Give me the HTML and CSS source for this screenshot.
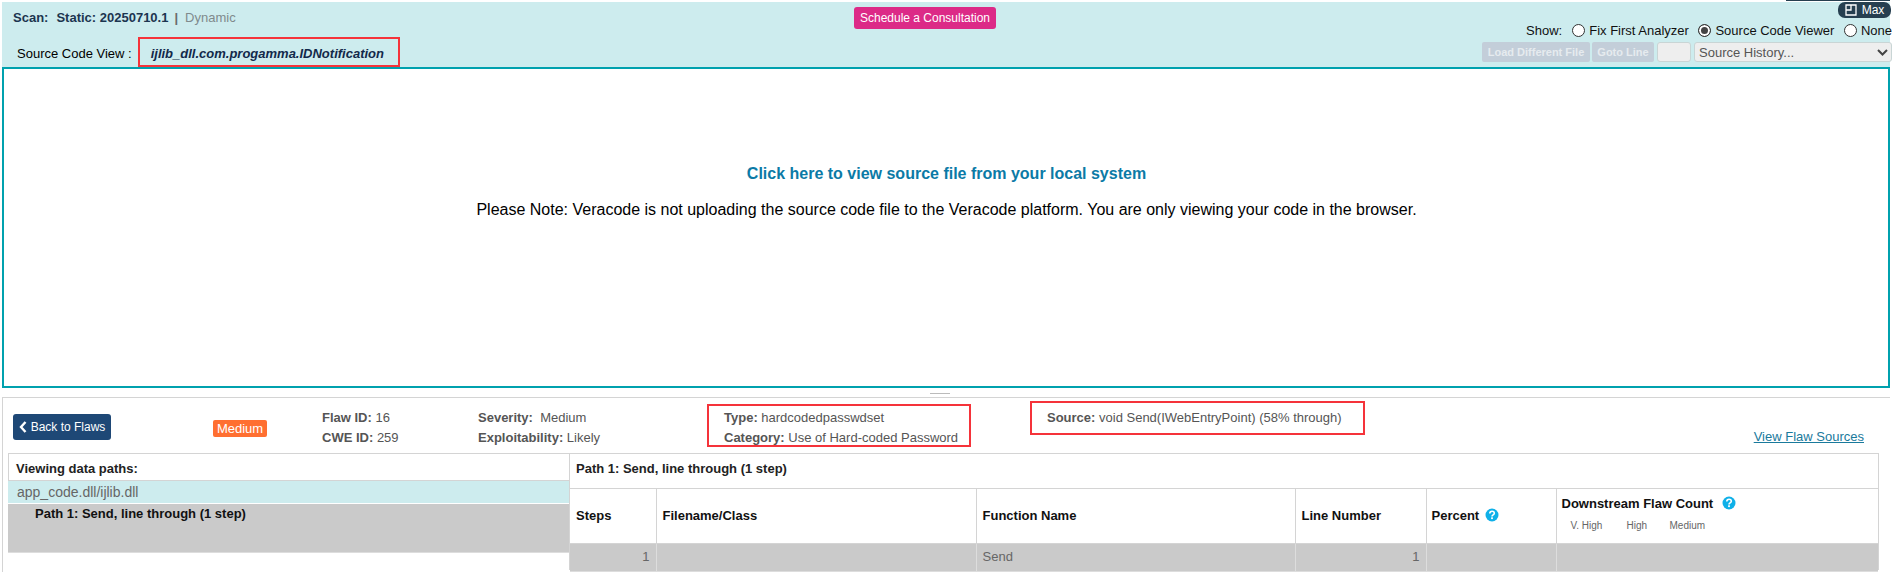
FILE: index.html
```html
<!DOCTYPE html>
<html lang="en">
<head>
<meta charset="utf-8">
<title>Source Code View</title>
<link rel="stylesheet" href="styles.css">
</head>
<body>
<div class="tab-sliver"></div>
<section class="viewer">
  <header class="viewer-head">
    <div class="head-left">
      <div class="scan-row"><b>Scan:</b><b class="scan-static">Static: 20250710.1</b><span class="scan-sep">|</span><span class="scan-dyn">Dynamic</span></div>
      <div class="file-row"><span>Source Code View :</span><em class="file-name">ijlib_dll.com.progamma.IDNotification</em></div>
    </div>
    <div class="head-center"><a class="consult">Schedule a Consultation</a></div>
    <div class="head-right">
      <div class="show-row">
        <span class="show-label">Show:</span>
        <span class="radio"></span><span class="radio-text">Fix First Analyzer</span>
        <span class="radio on"></span><span class="radio-text">Source Code Viewer</span>
        <span class="radio"></span><span>None</span>
      </div>
      <div class="tool-row">
        <span class="tool load">Load Different File</span>
        <span class="tool goto">Goto Line</span>
        <span class="goto-input"></span>
        <span class="history">Source History...<svg class="chev" width="11" height="7" viewBox="0 0 11 7"><path d="M1 1l4.500 4.500L10 1" fill="none" stroke="#444" stroke-width="2"/></svg></span>
      </div>
    </div>
    <div class="max"><svg width="12" height="12" viewBox="0 0 12 12"><path d="M1 1h10v10H1zM6 1v5H1" fill="none" stroke="#fff" stroke-width="1.300"/></svg>Max</div>
  </header>
  <div class="viewer-body">
    <a class="view-link">Click here to view source file from your local system</a>
    <p class="note">Please Note: Veracode is not uploading the source code file to the Veracode platform. You are only viewing your code in the browser.</p>
  </div>
</section>
<div class="splitter"><span></span></div>
<section class="flaw">
  <div class="summary">
    <div class="back-cell"><a class="back"><svg width="8" height="12" viewBox="0 0 8 12"><path d="M6.500 1L2 6l4.500 5" fill="none" stroke="#fff" stroke-width="2.400"/></svg>Back to Flaws</a></div>
    <div class="badge-cell"><span class="badge">Medium</span></div>
    <div class="facts f-id"><div><b>Flaw ID:</b> 16</div><div><b>CWE ID:</b> 259</div></div>
    <div class="facts f-sev"><div><b>Severity:</b>&nbsp; Medium</div><div><b>Exploitability:</b> Likely</div></div>
    <div class="facts f-type"><div><b>Type:</b> hardcodedpasswdset</div><div><b>Category:</b> Use of Hard-coded Password</div></div>
    <div class="facts f-src"><div><b>Source:</b> void Send(IWebEntryPoint) (58% through)</div></div>
    <a class="sources">View Flaw Sources</a>
  </div>
  <div class="paths">
    <div class="path-list">
      <div class="list-title">Viewing data paths:</div>
      <div class="list-module">app_code.dll/ijlib.dll</div>
      <div class="list-path">Path 1: Send, line through (1 step)</div>
    </div>
    <div class="path-detail">
      <div class="detail-title">Path 1: Send, line through (1 step)</div>
      <table class="steps">
        <colgroup><col class="c1"><col class="c2"><col class="c3"><col class="c4"><col class="c5"><col></colgroup>
        <tr class="head">
          <th>Steps</th><th>Filename/Class</th><th>Function Name</th><th>Line Number</th>
          <th class="tight">Percent <svg class="help" width="14" height="14" viewBox="0 0 14 14"><circle cx="7" cy="7" r="6.500" fill="#0fb0e8"/><path d="M4.800 5.500c0-3 4.500-3 4.500-.3 0 1.700-2.300 1.500-2.300 3.200" fill="none" stroke="#fff" stroke-width="1.600"/><rect x="6.100" y="9.300" width="1.800" height="1.800" fill="#fff"/></svg></th>
          <th class="tight down">
            <div class="down-title">Downstream Flaw Count <svg class="help help-far" width="14" height="14" viewBox="0 0 14 14"><circle cx="7" cy="7" r="6.500" fill="#0fb0e8"/><path d="M4.800 5.500c0-3 4.500-3 4.500-.3 0 1.700-2.300 1.500-2.300 3.200" fill="none" stroke="#fff" stroke-width="1.600"/><rect x="6.100" y="9.300" width="1.800" height="1.800" fill="#fff"/></svg></div>
            <div class="down-sub"><span>V. High</span><span>High</span><span>Medium</span></div>
          </th>
        </tr>
        <tr class="row">
          <td class="num">1</td><td></td><td>Send</td><td class="num">1</td><td></td><td></td>
        </tr>
      </table>
    </div>
  </div>
</section>
<div class="mark m-file"></div>
<div class="mark m-type"></div>
<div class="mark m-src"></div>
</body>
</html>
```
FILE: styles.css
```css
html, body { margin: 0; padding: 0; }
body {
  position: relative;
  width: 1892px;
  height: 572px;
  overflow: hidden;
  background: #fff;
  font-family: "Liberation Sans", Arial, sans-serif;
  font-size: 13px;
  color: #000;
  padding-top: 2px;
  box-sizing: border-box;
}
.tab-sliver {
  position: absolute;
  left: 1786px;
  top: 0;
  width: 104px;
  height: 1px;
  background: #263f50;
}
.viewer { margin-left: 2px; width: 1888px; }
.viewer-head {
  position: relative;
  box-sizing: border-box;
  height: 65px;
  background: #cdecee;
  display: flex;
}
.head-left { width: 852px; padding-left: 11px; box-sizing: border-box; }
.scan-row {
  display: flex;
  height: 30px;
  align-items: center;
  font-size: 13px;
  color: #1c3550;
}
.scan-static { margin-left: 8px; }
.scan-sep { margin: 0 7px 0 6px; color: #6b6b6b; font-weight: bold; }
.scan-dyn { color: #7f8a8c; }
.file-row {
  display: flex;
  align-items: center;
  height: 30px;
  margin-top: 6px;
  padding-left: 4px;
  font-size: 13px;
}
.file-name {
  margin-left: 19px;
  font-weight: bold;
  color: #12294a;
}
.head-center { width: 142px; padding-top: 5px; }
.consult {
  display: block;
  height: 22px;
  line-height: 22px;
  text-align: center;
  background: #dc2a87;
  color: #fff;
  font-size: 12px;
  border-radius: 3px;
}
.head-right {
  flex: 1;
  display: flex;
  flex-direction: column;
  align-items: flex-end;
  margin-right: -2px;
  padding-top: 19px;
}
.show-row {
  display: flex;
  align-items: center;
  height: 18px;
  font-size: 13px;
  color: #111;
  white-space: nowrap;
}
.show-label { margin-right: 10px; }
.radio {
  width: 11px;
  height: 11px;
  border: 1px solid #333;
  border-radius: 50%;
  background: #fff;
  margin-right: 4px;
}
.radio.on { background: #444; box-shadow: inset 0 0 0 2px #fff; }
.radio-text { margin-right: 9.500px; }
.tool-row { display: flex; align-items: center; gap: 2px; margin-top: 3px; }
.tool {
  height: 20px;
  line-height: 20px;
  text-align: center;
  background: #c3ced9;
  color: #e6ebef;
  font-size: 11px;
  font-weight: bold;
  border-radius: 2px;
}
.load { width: 108px; }
.goto { width: 62px; }
.goto-input {
  width: 32px;
  height: 18px;
  margin-left: 1px;
  background: #eee;
  border: 1px solid #c9d5d5;
  border-radius: 3px;
}
.history {
  position: relative;
  box-sizing: border-box;
  width: 198px;
  height: 20px;
  line-height: 19px;
  margin-left: 1px;
  padding-left: 4px;
  background: #eee;
  border: 1px solid #c9d5d5;
  border-radius: 3px;
  font-size: 13px;
  color: #555;
}
.chev { position: absolute; right: 3px; top: 6px; }
.max {
  position: absolute;
  right: -1px;
  top: 0;
  width: 53px;
  height: 16px;
  display: flex;
  align-items: center;
  justify-content: center;
  gap: 5px;
  background: #263f50;
  color: #fff;
  font-size: 12px;
  border-radius: 7px;
}
.viewer-body {
  box-sizing: border-box;
  height: 321px;
  border: 2px solid #00a1ae;
  text-align: center;
  padding: 96px 0 0 1px;
}
.view-link {
  display: block;
  color: #0b7aa6;
  font-size: 16px;
  font-weight: bold;
  line-height: 18px;
}
.note {
  margin: 18px 0 0;
  font-size: 16px;
  line-height: 18px;
}
.splitter { height: 9px; position: relative; }
.splitter span {
  position: absolute;
  left: 930px;
  top: 5px;
  width: 20px;
  height: 1px;
  background: #bbb;
}
.flaw {
  margin-left: 2px;
  width: 1888px;
  border-top: 1px solid #d4d4d4;
  border-left: 1px solid #d4d4d4;
  box-sizing: border-box;
  height: 175px;
}
.summary {
  position: relative;
  height: 55px;
  display: flex;
  font-size: 13px;
  color: #555;
}
.back-cell { width: 200px; padding: 16px 0 0 10px; box-sizing: border-box; }
.back {
  display: flex;
  align-items: center;
  justify-content: center;
  gap: 4px;
  width: 98px;
  height: 26px;
  background: #1e4876;
  color: #fff;
  border-radius: 3px;
  font-size: 12px;
}
.badge-cell { width: 119px; padding: 22px 0 0 10px; box-sizing: border-box; }
.badge {
  display: block;
  width: 54px;
  height: 17px;
  line-height: 17px;
  text-align: center;
  background: #ff6f31;
  color: #fff;
  font-size: 13px;
  border-radius: 2px;
}
.facts { padding-top: 10px; line-height: 20px; white-space: nowrap; box-sizing: border-box; }
.f-id { width: 156px; }
.f-sev { width: 246px; }
.f-type { width: 323px; }
.sources {
  position: absolute;
  right: 26px;
  top: 31px;
  color: #1a7a9c;
  text-decoration: underline;
  font-size: 13px;
  line-height: 16px;
}
.paths { display: flex; margin-left: 5px; margin-right: 11px; height: 117px; }
.path-list { width: 561px; border-top: 1px solid #d4d4d4; box-sizing: border-box; }
.list-title {
  box-sizing: border-box;
  height: 27px;
  line-height: 29px;
  padding-left: 7px;
  font-size: 13px;
  font-weight: bold;
  border-left: 1px solid #d4d4d4;
  border-bottom: 1px solid #d4d4d4;
  color: #222;
}
.list-module {
  height: 22px;
  line-height: 22px;
  padding-left: 9px;
  background: #cdecee;
  font-size: 14px;
  color: #666;
}
.list-path {
  box-sizing: border-box;
  height: 49px;
  margin-top: 1px;
  padding: 1px 0 0 27px;
  line-height: 18px;
  background: #cacaca;
  border-bottom: 1px solid #ddd;
  font-size: 13px;
  font-weight: bold;
  color: #111;
}
.path-detail {
  flex: 1;
  border: 1px solid #d4d4d4;
  border-bottom: 0;
  box-sizing: border-box;
  min-width: 0;
}
.detail-title {
  height: 34px;
  line-height: 29px;
  padding-left: 6px;
  font-size: 13px;
  font-weight: bold;
  color: #222;
  border-bottom: 1px solid #d4d4d4;
}
.steps {
  width: 100%;
  border-collapse: collapse;
  table-layout: fixed;
  font-size: 13px;
}
.c1 { width: 86px; }
.c2 { width: 320px; }
.c3 { width: 319px; }
.c4 { width: 131px; }
.c5 { width: 130px; }
.steps th, .steps td { padding: 0 6px; border-left: 1px solid #d4d4d4; }
.steps th:first-child, .steps td:first-child { border-left: 0; }
.steps th {
  height: 52px;
  padding-bottom: 2px;
  text-align: left;
  color: #111;
  border-bottom: 1px solid #d4d4d4;
  font-size: 13px;
}
.steps .tight { padding-left: 5px; }
.steps .help { vertical-align: -2px; margin-left: 2px; }
.steps .help-far { margin-left: 5px; }
.down-title { margin-top: -4px; line-height: 18px; }
.down-sub {
  display: flex;
  margin: 7px 0 0 9px;
  font-size: 10px;
  font-weight: normal;
  color: #666;
}
.down-sub span:nth-child(1) { width: 56px; }
.down-sub span:nth-child(2) { width: 43px; }
.row td {
  height: 25px;
  padding-bottom: 2px;
  background: #cacaca;
  color: #666;
  border-bottom: 1px solid #ddd;
  border-left-color: #ddd;
}
.row .num { text-align: right; }
.mark { position: absolute; box-sizing: border-box; border: 2px solid #f5333a; pointer-events: none; }
.m-file { left: 138px; top: 37px; width: 262px; height: 30px; }
.m-type { left: 707px; top: 404px; width: 264px; height: 43px; }
.m-src { left: 1030px; top: 401px; width: 335px; height: 34px; }
```
